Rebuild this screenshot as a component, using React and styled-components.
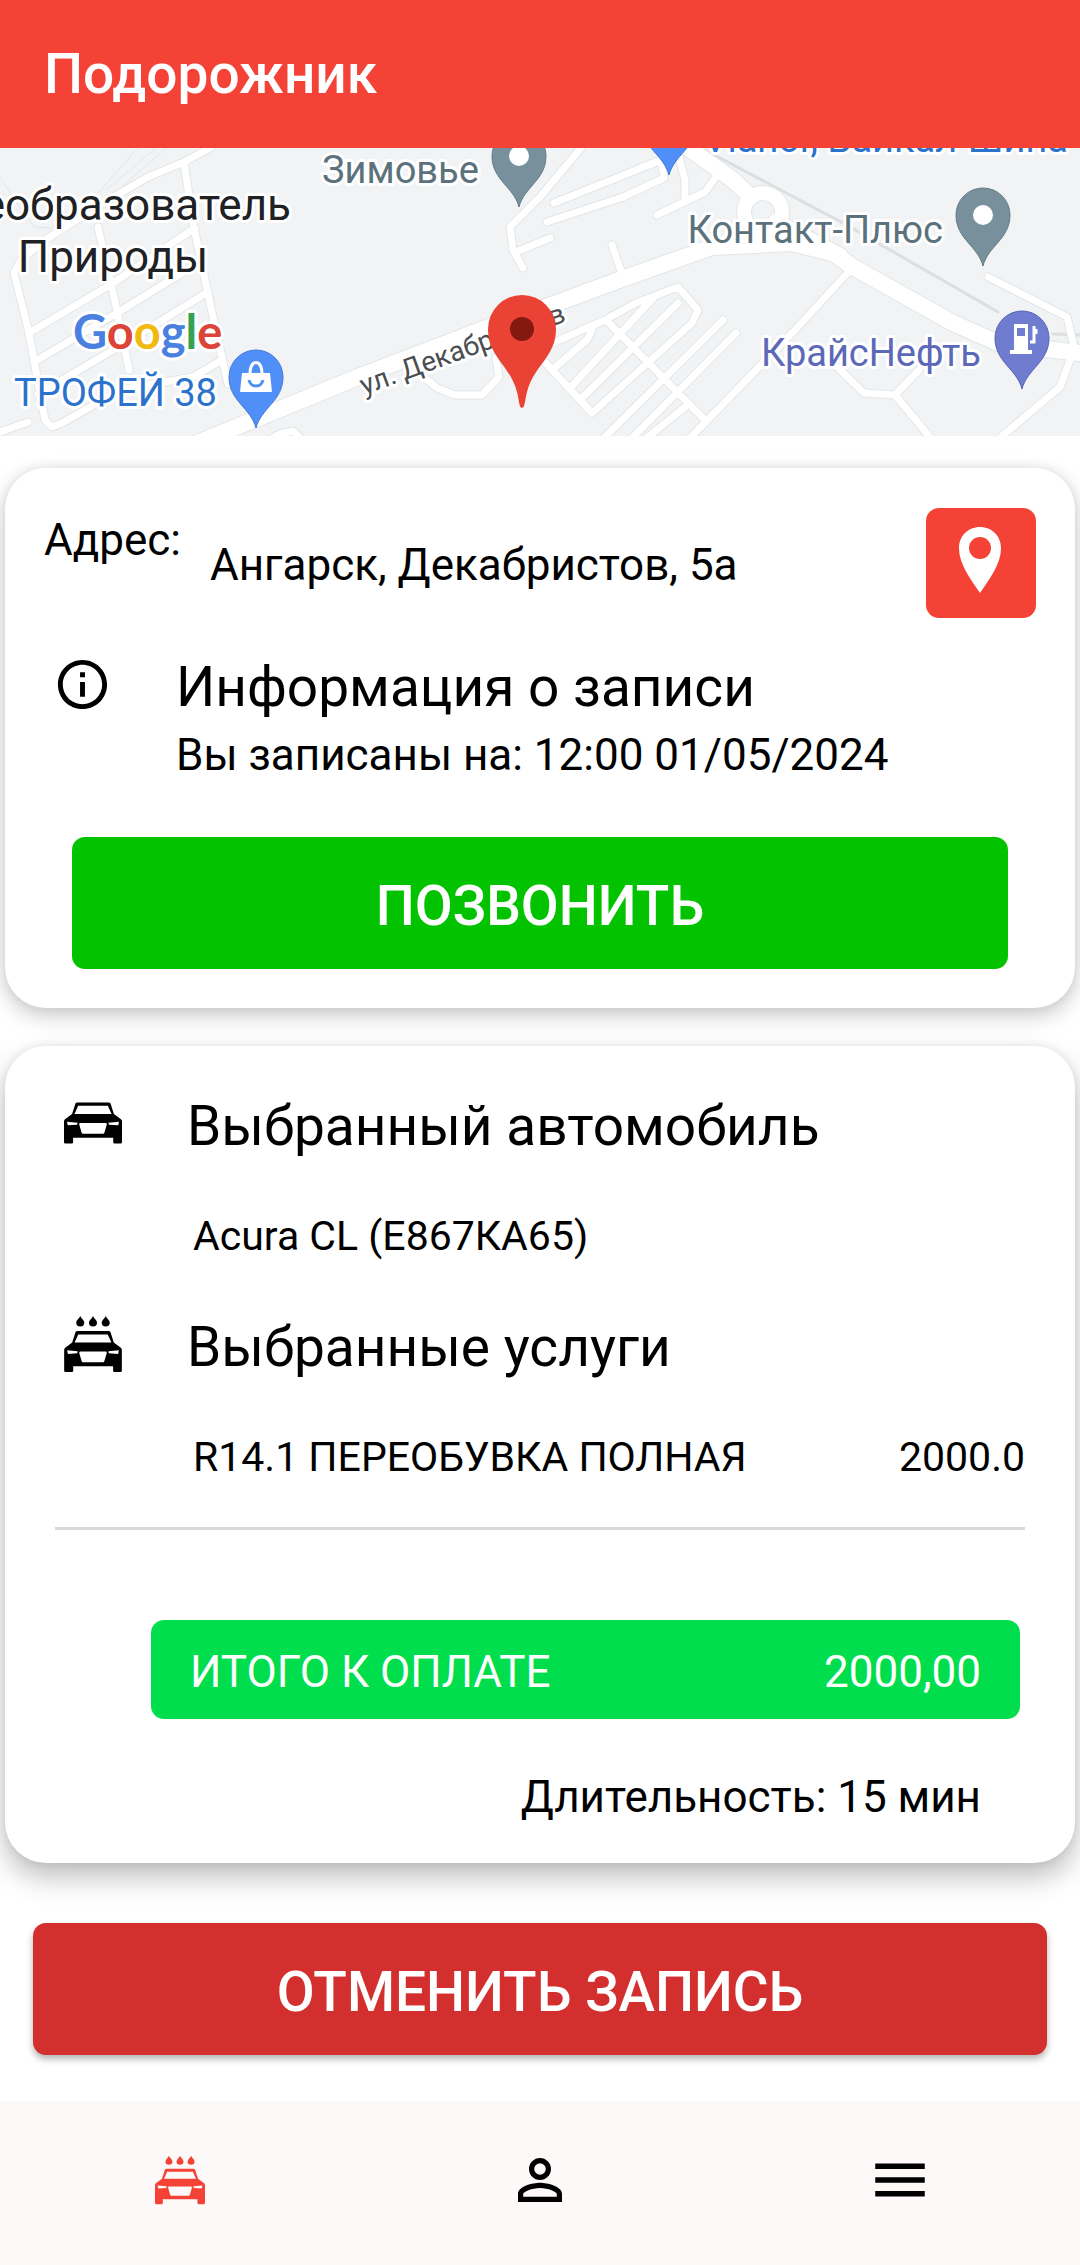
import React from "react";
import styled, { createGlobalStyle, css } from "styled-components";
import { MdMenu, MdOutlineInfo, MdPersonOutline } from "react-icons/md";

const GlobalStyle = createGlobalStyle`
  *, *::before, *::after { box-sizing: border-box; }
  body {
    margin: 0;
    background: #ffffff;
    color: #000000;
    font-family: Roboto, "Noto Sans", sans-serif;
    font-size: 44px;
    line-height: 52px;
  }
`;

const Page = styled.div`
  display: flex;
  flex-direction: column;
  min-height: 100vh;
`;

const Header = styled.header`
  display: flex;
  align-items: center;
  height: 148px;
  padding: 0 44px;
  background: #f44336;
  color: #ffffff;
`;

const AppTitle = styled.h1`
  margin: 0;
  font-size: 55px;
  line-height: 64px;
  font-weight: 500;
`;

const MapView = styled.svg`
  display: block;
  width: 100%;
  height: 288px;
  background: #f1f3f4;
`;

const MapLabel = styled.text`
  font-family: Roboto, "Noto Sans", sans-serif;
  font-size: ${(p) => p.$size || 38}px;
  fill: ${(p) => p.$color};
  stroke: #ffffff;
  stroke-width: 6px;
  stroke-linejoin: round;
  paint-order: stroke;
`;

const MapLogo = styled(MapLabel)`
  font-family: Lato, "Open Sans", sans-serif;
  font-weight: 700;
`;

const Content = styled.main`
  display: flex;
  flex-direction: column;
  flex: 1;
  padding: 32px 5px 46px;
`;

const Card = styled.section`
  border-radius: 41px;
  background: #ffffff;
`;

const BookingCard = styled(Card)`
  padding: 40px 39px 39px;
  box-shadow: 0 8px 22px rgba(0, 0, 0, 0.2), 0 0 12px rgba(0, 0, 0, 0.08);
`;

const OrderCard = styled(Card)`
  margin-top: 38px;
  padding: 48px 50px 40px;
  box-shadow: 0 14px 28px rgba(0, 0, 0, 0.26), 0 0 10px rgba(0, 0, 0, 0.08);
`;

const AddressRow = styled.div`
  display: flex;
  align-items: center;
  gap: 29px;
`;

const AddressLabel = styled.span`
  align-self: flex-start;
  padding-top: 6px;
`;

const AddressText = styled.span`
  flex: 1;
  padding-top: 4px;
`;

const solidButton = css`
  border: 0;
  border-radius: 13px;
  color: #ffffff;
  font-family: inherit;
  cursor: pointer;
`;

const PinButton = styled.button`
  ${solidButton}
  display: flex;
  align-items: center;
  justify-content: center;
  width: 110px;
  height: 110px;
  padding: 0 2px 6px 0;
  background: #f44336;
`;

const WideButton = styled.button`
  ${solidButton}
  height: 132px;
  padding: 6px 0 0;
  font-size: 55px;
  line-height: 64px;
  font-weight: 500;
`;

const CallButton = styled(WideButton)`
  margin: 56px 28px 0;
  background: #03c300;
`;

const CancelButton = styled(WideButton)`
  margin: 60px 28px 0;
  background: #d32f2f;
  box-shadow: 0 4px 7px rgba(0, 0, 0, 0.3);
`;

const BookingBody = styled.div`
  display: flex;
  flex-direction: column;
`;

const InfoRow = styled.div`
  display: flex;
  gap: 64px;
  margin-top: 37px;
  padding-left: 9px;
`;

const InfoText = styled.div`
  display: flex;
  flex-direction: column;
  gap: 10px;
`;

const Heading = styled.h2`
  margin: 0;
  font-size: 55px;
  line-height: 64px;
  font-weight: 400;
`;

const Plain = styled.p`
  margin: 0;
`;

const Group = styled.div`
  display: flex;
  flex-direction: column;
  gap: 54px;
  & + & {
    margin-top: 55px;
  }
`;

const GroupHead = styled.div`
  display: grid;
  grid-template-columns: 123px 1fr;
  align-items: center;
  padding-left: 9px;

  svg {
    margin-bottom: 6px;
  }
`;

const GroupItem = styled.div`
  display: flex;
  justify-content: space-between;
  padding-left: 138px;
  font-size: 41px;
  line-height: 48px;
`;

const Divider = styled.hr`
  height: 3px;
  margin: 46px 0 0;
  border: 0;
  background: #dadada;
`;

const Total = styled.div`
  display: flex;
  align-items: center;
  justify-content: space-between;
  height: 99px;
  margin: 90px 5px 0 96px;
  padding: 4px 39px 0;
  border-radius: 13px;
  background: #00de4d;
  color: #ffffff;
`;

const Duration = styled.p`
  margin: 52px 44px 0 0;
  text-align: right;
`;

const TabBar = styled.nav`
  display: grid;
  grid-template-columns: repeat(3, 1fr);
  height: 164px;
  background: #fdf9f8;
`;

const Tab = styled.a`
  display: flex;
  align-items: center;
  justify-content: center;
  padding-bottom: 6px;
  color: ${(p) => (p.$active ? "#f44336" : "#000000")};
`;

const CarShape = () => (
  <path
    fillRule="evenodd"
    d="M83 38H177Q180 38 182 41L192 72L213 88Q216 91 216 94V156Q216 160 212 160H194Q190 160 190 156V143H71V156Q71 160 67 160H48Q44 160 44 156V94Q44 91 47 88L68 72L78 41Q80 38 83 38Z
       M86 48L75 72H185L174 48Z
       M53 95L84 98L83 104L55 106Z
       M207 95L176 98L177 104L205 106Z
       M93 99Q88 99 89 103L96 127Q97 131 100 131H160Q163 131 164 127L171 103Q172 99 167 99Z"
  />
);

const CarIcon = () => (
  <svg width="58" height="42" viewBox="44 38 172 122" fill="currentColor" aria-hidden="true">
    <CarShape />
  </svg>
);

const WashIcon = ({ width = 58, height = 56 }) => (
  <svg width={width} height={height} viewBox="44 -7 172 167" fill="currentColor" aria-hidden="true">
    {[92, 130, 168].map((x) => (
      <path key={x} d={`M${x} -7C${x + 4} 2 ${x + 12} 6 ${x + 12} 13A12 11 0 0 1 ${x - 12} 13C${x - 12} 6 ${x - 4} 2 ${x} -7Z`} />
    ))}
    <CarShape />
  </svg>
);

const PinIcon = () => (
  <svg width="42" height="66" viewBox="0 0 42 66" fill="currentColor" aria-hidden="true">
    <path
      fillRule="evenodd"
      d="M21 0C9 0 0 9 0 21C0 37 11 51 21 66C31 51 42 37 42 21C42 9 33 0 21 0ZM21 10A11 11 0 1 1 21 32A11 11 0 1 1 21 10Z"
    />
  </svg>
);

const MapPin = ({ x, y, fill, edge, children }) => (
  <g transform={`translate(${x} ${y})`}>
    <path
      d="M0 51C-5 31 -27 24 -27 0A27 27 0 0 1 27 0C27 24 5 31 0 51Z"
      fill={fill}
      stroke={edge}
      strokeWidth="1"
    />
    {children}
  </g>
);

const smallRoads = [
  "M210 0L184 14L148 29L103 55L45 92L21 112L14 125L29 185L45 272L52 279L62 275L120 242L193 229L222 212",
  "M184 14L193 75L213 169L228 236",
  "M98 79L114 149L129 222",
  "M29 185L110 137L195 80",
  "M34 214L117 165L203 112",
  "M38 246L120 198L208 144",
  "M0 284L28 274",
  "M262 296L280 286L293 283L300 290",
  "M424 229L437 240L455 247L482 247L499 229L496 210",
  "M581 0L540 49L510 79L513 102L523 120",
  "M516 104L550 90",
  "M554 55L654 15",
  "M547 74L623 49L664 30L661 12L640 20",
  "M678 5L685 32L685 52",
  "M657 67L705 44L716 29",
  "M612 97L623 129",
  "M853 119L795 182L691 289",
  "M988 129L1067 169L1074 199L1070 212L1060 239L1001 289",
  "M833 215L864 245L895 247L929 288",
  "M895 247L919 222",
  "M530 205L605 172L636 155L678 139L698 162L692 175L592 265L540 209",
  "M609 175L705 272",
  "M592 182L587 192L553 221",
  "M655 148L570 240",
  "M678 155L582 250",
  "M723 172L605 289",
  "M736 185L633 289",
  "M685 259L648 289",
];

const mainRoads = [
  "M195 296L358 229L489 179L557 155L619 132L667 115L712 99L791 95L833 105L853 119L953 175L998 195L1080 205",
  "M680 -6L733 32L750 48",
  "M776 74L791 82L840 108",
];

const CityMap = () => (
  <MapView viewBox="0 0 1080 288" preserveAspectRatio="xMidYMid slice" role="img" aria-label="Карта">
    <g fill="none" strokeLinejoin="round" strokeLinecap="round">
      <path d="M0 29L24 66L34 79L52 80L84 55M138 0L98 45M156 0L106 42M166 0L116 44" stroke="#e3e6e8" strokeWidth="1" />
      <path d="M705 2L843 75L998 164M1053 186L1080 187" stroke="#dcdee0" strokeWidth="3" />
      <g stroke="#e3e6e8">
        <path d={smallRoads.join("")} strokeWidth="9" />
        <path d={mainRoads.join("")} strokeWidth="18" />
        <circle cx="763" cy="64" r="19" strokeWidth="16" />
      </g>
      <g stroke="#ffffff">
        <path d={smallRoads.join("")} strokeWidth="7" />
        <path d={mainRoads.join("")} strokeWidth="16" />
        <circle cx="763" cy="64" r="19" strokeWidth="14" />
      </g>
    </g>

    <MapLabel x="322" y="35" $color="#5b727d">Зимовье</MapLabel>
    <MapLabel x="291" y="72" $size={44} $color="#202124" textAnchor="end">еобразователь</MapLabel>
    <MapLabel x="113" y="124" $size={44} $color="#202124" textAnchor="middle">Природы</MapLabel>
    <MapLabel x="14" y="258" $color="#2b72cc">ТРОФЕЙ 38</MapLabel>
    <MapLabel x="943" y="95" $color="#5b727d" textAnchor="end">Контакт-Плюс</MapLabel>
    <MapLabel x="981" y="218" $color="#5c68b8" textAnchor="end">КрайсНефть</MapLabel>
    <MapLabel x="1068" y="4" $color="#2b72cc" textAnchor="end">Vianor, Байкал-Шина</MapLabel>
    <MapLabel transform="translate(364 247) rotate(-20)" $size={28} $color="#4a4e52">ул. Декабристов</MapLabel>
    <MapLogo x="73" y="201" $size={47}>
      <tspan fill="#4a80e0">G</tspan>
      <tspan fill="#dc4437">o</tspan>
      <tspan fill="#f2b90f">o</tspan>
      <tspan fill="#4a80e0">g</tspan>
      <tspan fill="#34a253">l</tspan>
      <tspan fill="#dc4437">e</tspan>
    </MapLogo>

    <MapPin x={519} y={8} fill="#78909c" edge="#647b87">
      <circle r="10" fill="#ffffff" />
    </MapPin>
    <MapPin x={983} y={67} fill="#78909c" edge="#647b87">
      <circle r="10" fill="#ffffff" />
    </MapPin>
    <MapPin x={669} y={-24} fill="#4f8ff7" edge="#4079d8" />
    <MapPin x={256} y={229} fill="#4f8ff7" edge="#4079d8">
      <path d="M-14 -4H14L16 15H-16Z" fill="#ffffff" />
      <path d="M-6 -4C-6 -18 6 -18 6 -4" fill="none" stroke="#ffffff" strokeWidth="3" />
      <path d="M-7 3C-5 11 5 11 7 3" fill="none" stroke="#4f8ff7" strokeWidth="3" />
    </MapPin>
    <MapPin x={1022} y={190} fill="#6f7ccf" edge="#5663b4">
      <path fillRule="evenodd" fill="#ffffff" d="M-8 -14H6V12H10V16H-12V12H-8ZM-5 -10V-2H3V-10Z" />
      <path d="M8 4H12V-8M12 -12V-5M14 -9V-4" fill="none" stroke="#ffffff" strokeWidth="3" />
    </MapPin>
    <g transform="translate(522 181)">
      <path d="M0 79C-3 79 -3 70 -5 63C-12 36 -34 28 -34 0A34 34 0 0 1 34 0C34 28 12 36 5 63C3 70 3 79 0 79Z" fill="#ea4335" />
      <circle r="12" fill="#84190f" />
    </g>
  </MapView>
);

export default function App() {
  return (
    <>
      <GlobalStyle />
      <Page>
        <Header>
          <AppTitle>Подорожник</AppTitle>
        </Header>
        <CityMap />
        <Content>
          <BookingCard>
            <BookingBody>
              <AddressRow>
                <AddressLabel>Адрес:</AddressLabel>
                <AddressText>Ангарск, Декабристов, 5а</AddressText>
                <PinButton type="button" aria-label="Показать на карте">
                  <PinIcon />
                </PinButton>
              </AddressRow>
              <InfoRow>
                <MdOutlineInfo size={59} aria-hidden="true" />
                <InfoText>
                  <Heading>Информация о записи</Heading>
                  <Plain>Вы записаны на: 12:00 01/05/2024</Plain>
                </InfoText>
              </InfoRow>
              <CallButton type="button">ПОЗВОНИТЬ</CallButton>
            </BookingBody>
          </BookingCard>

          <OrderCard>
            <Group>
              <GroupHead>
                <CarIcon />
                <Heading>Выбранный автомобиль</Heading>
              </GroupHead>
              <GroupItem>Acura CL (Е867КА65)</GroupItem>
            </Group>
            <Group>
              <GroupHead>
                <WashIcon />
                <Heading>Выбранные услуги</Heading>
              </GroupHead>
              <GroupItem>
                <span>R14.1 ПЕРЕОБУВКА ПОЛНАЯ</span>
                <span>2000.0</span>
              </GroupItem>
            </Group>
            <Divider />
            <Total>
              <span>ИТОГО К ОПЛАТЕ</span>
              <span>2000,00</span>
            </Total>
            <Duration>Длительность: 15 мин</Duration>
          </OrderCard>

          <CancelButton type="button">ОТМЕНИТЬ ЗАПИСЬ</CancelButton>
        </Content>
        <TabBar>
          <Tab href="#booking" aria-label="Запись" $active>
            <WashIcon width={50} height={50} />
          </Tab>
          <Tab href="#profile" aria-label="Профиль">
            <MdPersonOutline size={66} />
          </Tab>
          <Tab href="#menu" aria-label="Меню">
            <MdMenu size={66} />
          </Tab>
        </TabBar>
      </Page>
    </>
  );
}
